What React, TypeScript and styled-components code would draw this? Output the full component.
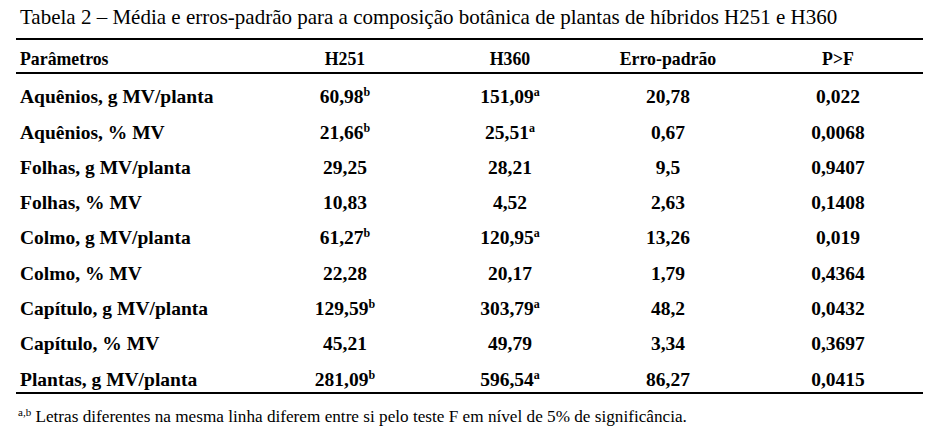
import React from "react";
import styled, { createGlobalStyle } from "styled-components";

const Global = createGlobalStyle`
  html, body { margin: 0; padding: 0; background: #fff; }
  body { font-family: "Liberation Serif", "Times New Roman", serif; color: #000; }
`;

const Page = styled.div`
  width: 946px;
  height: 438px;
  background: #fff;
  overflow: hidden;
  font-family: "Liberation Serif", "Times New Roman", serif;
`;

const Title = styled.div`
  font-size: 21px;
  line-height: 24px;
  padding: 5px 0 0 20px;
  height: 32px;
  box-sizing: border-box;
  white-space: nowrap;
`;

const Table = styled.div`
  margin: 6px 0 0 16px;
  width: 907px;
  border-top: 2px solid #000;
  border-bottom: 2px solid #000;
`;

const Row = styled.div<{ $head?: boolean }>`
  display: grid;
  grid-template-columns: 237px 184px 146px 170px 170px;
  align-items: end;
  height: ${(p) => (p.$head ? "34px" : "35.3px")};
  box-sizing: border-box;
  padding-bottom: ${(p) => (p.$head ? "2px" : "1px")};
  font-weight: bold;
  font-size: ${(p) => (p.$head ? "17.8px" : "19.5px")};
  line-height: 22px;
  border-bottom: ${(p) => (p.$head ? "2px solid #000" : "none")};
`;

const Label = styled.div`
  padding-left: 4px;
  white-space: nowrap;
`;

const Cell = styled.div`
  text-align: center;
  white-space: nowrap;
`;

const Sup = styled.sup`
  font-size: 12px;
  line-height: 0;
  vertical-align: 7px;
`;

const Foot = styled.div`
  font-size: 17.2px;
  line-height: 20px;
  padding: 13px 0 0 18px;
  white-space: nowrap;
`;

const FootSup = styled.sup`
  font-size: 11px;
  line-height: 0;
  vertical-align: 6px;
`;

type R = [string, string, string, string, string, string?, string?];
const rows: R[] = [
  ["Aquênios, g MV/planta", "60,98", "151,09", "20,78", "0,022", "b", "a"],
  ["Aquênios, % MV", "21,66", "25,51", "0,67", "0,0068", "b", "a"],
  ["Folhas, g MV/planta", "29,25", "28,21", "9,5", "0,9407"],
  ["Folhas, % MV", "10,83", "4,52", "2,63", "0,1408"],
  ["Colmo, g MV/planta", "61,27", "120,95", "13,26", "0,019", "b", "a"],
  ["Colmo, % MV", "22,28", "20,17", "1,79", "0,4364"],
  ["Capítulo, g MV/planta", "129,59", "303,79", "48,2", "0,0432", "b", "a"],
  ["Capítulo, % MV", "45,21", "49,79", "3,34", "0,3697"],
  ["Plantas, g MV/planta", "281,09", "596,54", "86,27", "0,0415", "b", "a"],
];

export default function App() {
  return (
    <Page>
      <Global />
      <Title>Tabela 2 – Média e erros-padrão para a composição botânica de plantas de híbridos H251 e H360</Title>
      <Table>
        <Row $head>
          <Label>Parâmetros</Label>
          <Cell>H251</Cell>
          <Cell>H360</Cell>
          <Cell>Erro-padrão</Cell>
          <Cell>P&gt;F</Cell>
        </Row>
        {rows.map((r) => (
          <Row key={r[0]}>
            <Label>{r[0]}</Label>
            <Cell>
              {r[1]}
              {r[5] && <Sup>{r[5]}</Sup>}
            </Cell>
            <Cell>
              {r[2]}
              {r[6] && <Sup>{r[6]}</Sup>}
            </Cell>
            <Cell>{r[3]}</Cell>
            <Cell>{r[4]}</Cell>
          </Row>
        ))}
      </Table>
      <Foot>
        <FootSup>a,b</FootSup> Letras diferentes na mesma linha diferem entre si pelo teste F em nível de 5% de significância.
      </Foot>
    </Page>
  );
}
